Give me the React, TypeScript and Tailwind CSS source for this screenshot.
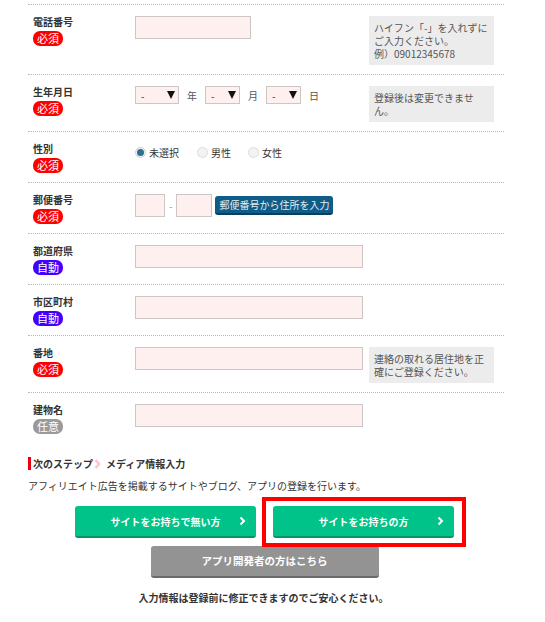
import type { ReactNode } from 'react';

type BadgeKind = 'req' | 'auto' | 'opt';

function Badge({ kind }: { kind: BadgeKind }) {
    const styles: Record<BadgeKind, string> = {
        req: 'bg-[#ff0000]',
        auto: 'bg-[#4400ff]',
        opt: 'bg-[#9a9a9a]',
    };
    const text = { req: '必須', auto: '自動', opt: '任意' }[kind];
    return (
        <span className={`mt-[2px] flex h-[15px] w-[30px] items-center justify-center rounded-[7px] text-[11px] leading-none text-white ${styles[kind]}`}>
            {text}
        </span>
    );
}

function Row({ label, badge, hint, children }: { label: string; badge: BadgeKind; hint?: string[]; children: ReactNode }) {
    return (
        <div className="flex border-t border-dotted border-[#b8b8b8] pt-[10px] pb-[9px]">
            {/* label column */}
            <div className="w-[107px] shrink-0 pl-[5px]">
                <div className="h-[14px] text-[10px] font-bold leading-[14px] text-[#333]">{label}</div>
                <Badge kind={badge} />
            </div>
            <div className="flex-1 pt-[1px]">{children}</div>
            {hint && (
                <div className="mt-[1px] mr-[10px] w-[125px] shrink-0 self-start bg-[#ececec] px-[5px] py-[5px] text-[10px] text-[#555]">
                    {hint.map((line) => (
                        <div key={line} className="h-[13px] leading-[13px] whitespace-nowrap">
                            {line}
                        </div>
                    ))}
                </div>
            )}
        </div>
    );
}

function TextBox({ w }: { w: string }) {
    return <input type="text" className={`block h-[23px] ${w} border border-[#cdc6c6] bg-[#fff0f0] outline-none`} />;
}

function SelectBox({ w }: { w: string }) {
    return (
        <div className={`flex h-[18px] ${w} items-center justify-between border border-[#cdc6c6] bg-[#fff0f0] pr-[3px] pl-[5px] text-[10px] text-[#333]`}>
            <span>-</span>
            <svg width="8" height="8" viewBox="0 0 8 8">
                <polygon points="0,0 8,0 4,8" fill="#111" />
            </svg>
        </div>
    );
}

function Radio({ checked, label }: { checked?: boolean; label: string }) {
    return (
        <label className="flex items-center gap-[3px] text-[10px] text-[#333]">
            {checked ? (
                <span className="flex h-[11px] w-[11px] items-center justify-center rounded-full border border-[#c9d3d9] bg-[#eef3f6]">
                    <span className="h-[7px] w-[7px] rounded-full bg-[#2f6e8e]" />
                </span>
            ) : (
                <span className="h-[11px] w-[11px] rounded-full border border-[#dcdcdc] bg-[#f3f3f3]" />
            )}
            {label}
        </label>
    );
}

function GreenButton({ children }: { children: ReactNode }) {
    return (
        <div className="relative flex h-[32px] w-[181px] items-center justify-center rounded-[3px] border-b-2 border-[#009764] bg-[#00c389] text-[10px] font-bold text-white">
            {children}
            <svg className="absolute right-[10px]" width="7" height="10" viewBox="0 0 7 10">
                <polyline points="1.5,1.5 5,5 1.5,8.5" fill="none" stroke="#fff" strokeWidth="2" />
            </svg>
        </div>
    );
}

export default function App() {
    return (
        <div className="min-h-screen bg-white pt-[4px] font-['Noto_Sans_CJK_JP',sans-serif] text-[#333]">
            <div className="ml-[28px] w-[476px]">
                <Row label="電話番号" badge="req" hint={['ハイフン「-」を入れずに', 'ご入力ください。', '例）09012345678']}>
                    <TextBox w="w-[116px]" />
                </Row>

                <Row label="生年月日" badge="req" hint={['登録後は変更できませ', 'ん。']}>
                    <div className="flex items-center gap-[8px] text-[10px] text-[#555]">
                        <SelectBox w="w-[44px]" />
                        <span>年</span>
                        <SelectBox w="w-[35px]" />
                        <span>月</span>
                        <SelectBox w="w-[35px]" />
                        <span>日</span>
                    </div>
                </Row>

                <Row label="性別" badge="req">
                    <div className="flex h-[18px] items-center">
                        <Radio checked label="未選択" />
                        <div className="ml-[18px]"><Radio label="男性" /></div>
                        <div className="ml-[17px]"><Radio label="女性" /></div>
                    </div>
                </Row>

                <Row label="郵便番号" badge="req">
                    <div className="flex items-center">
                        <TextBox w="w-[30px]" />
                        <span className="mx-[4px] text-[10px] text-[#999]">-</span>
                        <TextBox w="w-[36px]" />
                        <button className="ml-[3px] h-[19px] w-[118px] rounded-[3px] border-b-2 border-[#073f5e] bg-[#0f5d86] text-[10px] leading-none text-[#e4edf3]">
                            郵便番号から住所を入力
                        </button>
                    </div>
                </Row>

                <Row label="都道府県" badge="auto">
                    <TextBox w="w-[228px]" />
                </Row>

                <Row label="市区町村" badge="auto">
                    <TextBox w="w-[228px]" />
                </Row>

                <Row label="番地" badge="req" hint={['連絡の取れる居住地を正', '確にご登録ください。']}>
                    <TextBox w="w-[228px]" />
                </Row>

                <Row label="建物名" badge="opt">
                    <TextBox w="w-[228px]" />
                </Row>

                {/* Next step */}
                <div className="mt-[14px] flex h-[13px] items-center border-l-[3px] border-[#e60012] pl-[2px] text-[10px] font-bold">
                    <span>次のステップ</span>
                    <svg className="mr-[5px] ml-[1px]" width="7" height="10" viewBox="0 0 7 10">
                        <polyline points="1.5,1 5,5 1.5,9" fill="none" stroke="#ffc3cf" strokeWidth="2.6" />
                    </svg>
                    <span>メディア情報入力</span>
                </div>
                <p className="mt-[9px] text-[10px] leading-[14px]">
                    アフィリエイト広告を掲載するサイトやブログ、アプリの登録を行います。
                </p>

                <div className="mt-[13px] flex justify-center gap-[17px] pr-[3px]">
                    <GreenButton>サイトをお持ちで無い方</GreenButton>
                    <div className="relative">
                        <GreenButton>サイトをお持ちの方</GreenButton>
                        <div className="pointer-events-none absolute -top-[9px] -right-[12px] -bottom-[9px] -left-[11px] border-4 border-[#ff0000]" />
                    </div>
                </div>

                <div className="mt-[8px] flex justify-center pr-[3px]">
                    <div className="flex h-[32px] w-[228px] items-center justify-center rounded-[3px] border-b-2 border-[#6a6a6a] bg-[#939393] text-[10.5px] font-bold text-white">
                        アプリ開発者の方はこちら
                    </div>
                </div>

                <p className="mt-[13px] pr-[5px] text-center text-[10px] leading-[14px] font-bold">
                    入力情報は登録前に修正できますのでご安心ください。
                </p>
            </div>
        </div>
    );
}
